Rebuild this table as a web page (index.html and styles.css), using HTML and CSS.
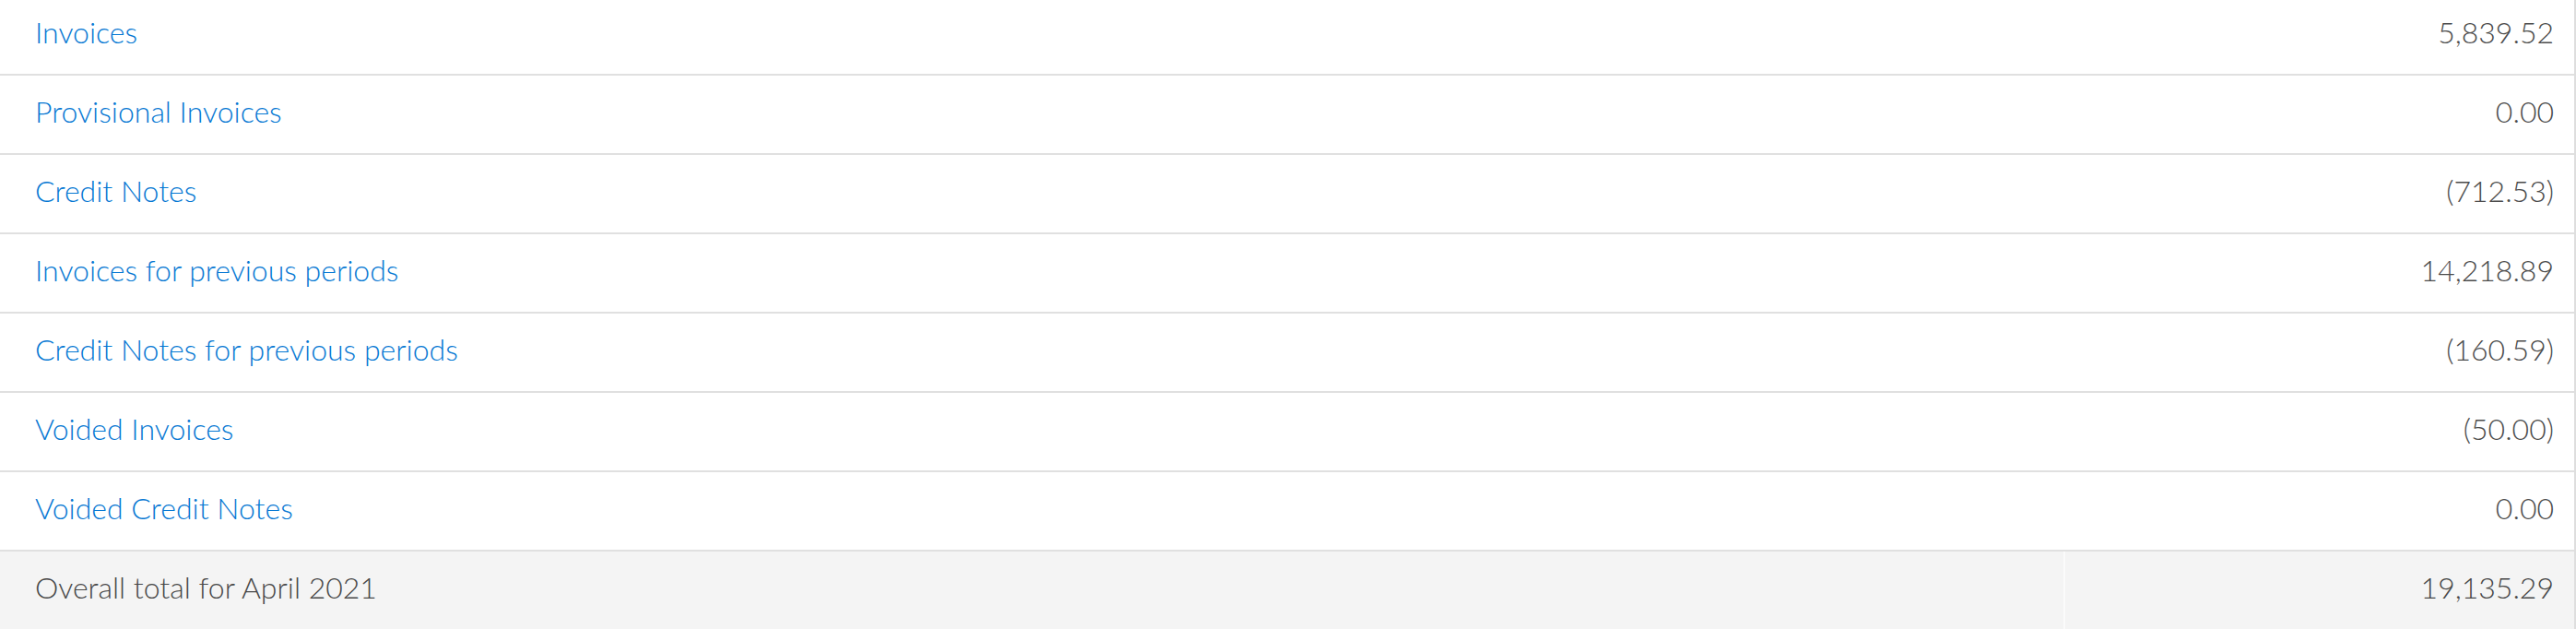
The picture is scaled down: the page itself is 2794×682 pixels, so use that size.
FILE: index.html
```html
<!DOCTYPE html>
<html>
<head>
<meta charset="utf-8">
<link rel="stylesheet" href="styles.css">
</head>
<body>
<div class="summary">
  <div class="row"><a class="label" href="#">Invoices</a><span class="amount">5,839.52</span></div>
  <div class="row"><a class="label" href="#">Provisional Invoices</a><span class="amount">0.00</span></div>
  <div class="row"><a class="label" href="#">Credit Notes</a><span class="amount">(712.53)</span></div>
  <div class="row"><a class="label" href="#">Invoices for previous periods</a><span class="amount">14,218.89</span></div>
  <div class="row"><a class="label" href="#">Credit Notes for previous periods</a><span class="amount">(160.59)</span></div>
  <div class="row"><a class="label" href="#">Voided Invoices</a><span class="amount">(50.00)</span></div>
  <div class="row"><a class="label" href="#">Voided Credit Notes</a><span class="amount">0.00</span></div>
  <div class="row total"><span class="label">Overall total for April 2021</span><span class="amount">19,135.29</span></div>
</div>
</body>
</html>
```
FILE: styles.css
```css
html, body {
  margin: 0;
  padding: 0;
  background: #ffffff;
}
body {
  font-family: Lato, "Open Sans", sans-serif;
  font-weight: 300;
  font-size: 32px;
  overflow: hidden;
}
.summary {
  margin-top: -4px;
  width: 2792px;
  border-right: 2px solid #dedede;
}
.row {
  display: grid;
  grid-template-columns: 1fr 554px;
  height: 86px;
  box-sizing: border-box;
  padding-bottom: 7px;
  border-bottom: 2px solid #e0e0e0;
  align-items: center;
}
.label {
  padding-left: 38px;
  color: #0678d3;
  text-decoration: none;
}
.amount {
  text-align: right;
  padding-right: 22px;
  color: #4c4c4c;
}
.total {
  background: #f4f4f4;
  border-bottom: none;
  padding-bottom: 0;
  height: 84px;
}
.total .label {
  color: #484848;
  padding-bottom: 7px;
}
.total .amount {
  height: 100%;
  display: flex;
  align-items: center;
  justify-content: flex-end;
  padding-bottom: 7px;
  border-left: 2px solid #fbfbfb;
  box-sizing: border-box;
  color: #484848;
}
```
